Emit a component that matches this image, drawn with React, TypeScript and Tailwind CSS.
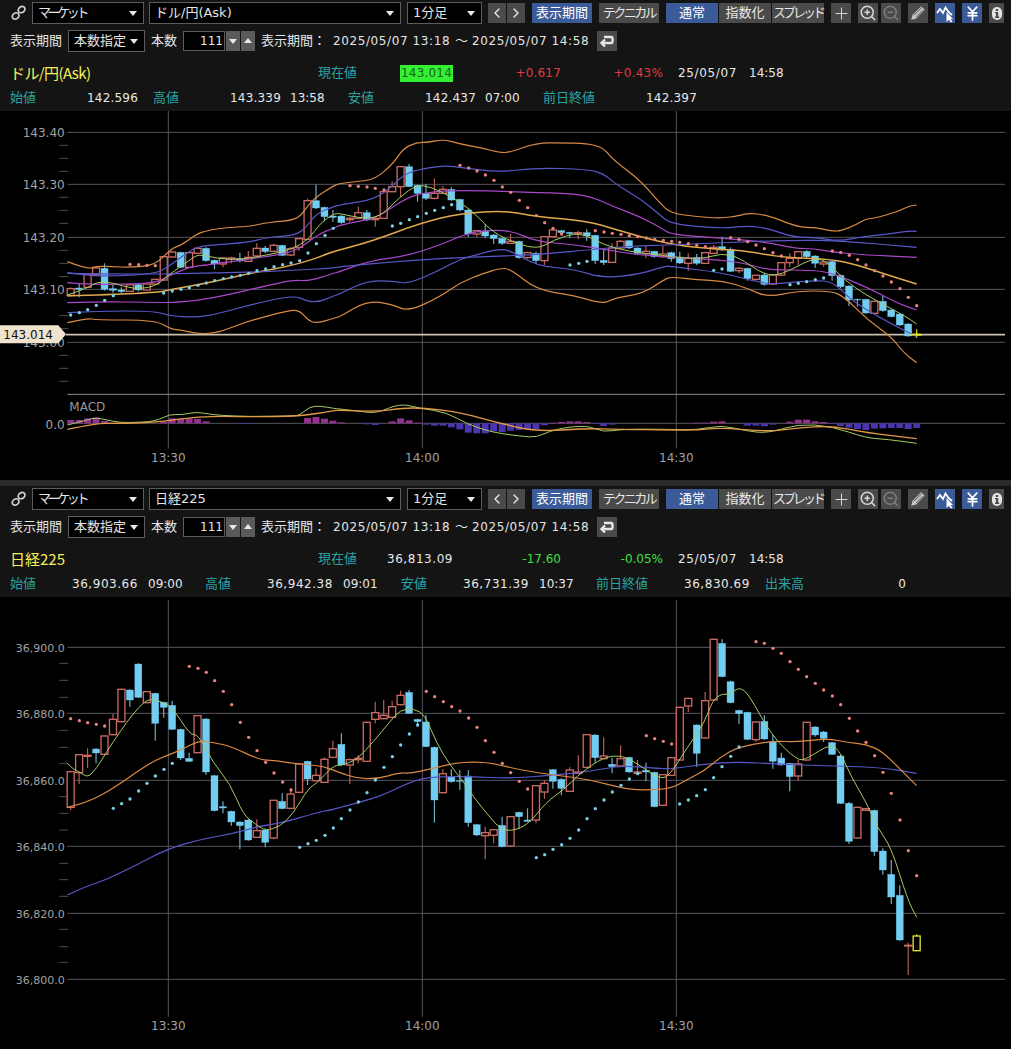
import React from 'react';
import { ChevronLeft, ChevronRight, Plus, ZoomIn, ZoomOut, JapaneseYen } from 'lucide-react';

// All chart coordinates are 3x screen pixels (x = screen x * 3).
type Pt = [number, number];
// kind, body top, body bottom, wick top, wick bottom
type Candle = [number, number, number, number, number];
const R = 0;
const B = 1;
const Y = 2;

const Z4 = 1020;
const Z5 = 2013;
const off = (o: number, pts: Pt[]): Pt[] => pts.map(([x, y]) => [x + o, y] as Pt);
const cx = (i: number) => 212 + 25.38 * i;

const usdCandles: Candle[] = [
  [R,536,556,532,558],[B,534,538,520,562],[R,492,532,490,535],[R,474,494,470,497],[B,475,538,460,542],
  [B,536,541,524,548],[B,540,545,532,550],[R,524,544,520,546],[B,524,540,520,544],[R,522,540,520,542],
  [R,508,522,506,525],[R,440,510,438,512],[R,426,441,424,442],[B,427,472,425,475],[R,428,472,426,474],
  [R,415,430,412,432],[B,415,452,412,455],[B,451,462,448,478],[R,444,462,442,472],[R,444,447,440,460],
  [B,446,453,428,457],[R,442,454,423,456],[R,415,438,400,442],[B,414,425,408,430],[R,406,424,401,427],
  [B,406,436,404,438],[R,416,435,412,437],[R,386,412,384,422],[R,272,388,266,390],[B,272,294,224,297],
  [B,292,320,290,334],[B,318,322,300,335],[B,318,338,316,341],[R,325,329,322,335],[R,308,325,290,328],
  [B,308,330,300,333],[R,325,329,322,350],[R,245,325,238,327],[R,230,245,214,247],[R,170,230,168,262],
  [B,170,230,162,232],[B,226,250,224,275],[B,250,265,222,270],[R,250,265,205,268],[R,238,250,228,252],
  [B,238,270,232,272],[B,268,300,266,304],[B,300,372,298,380],[R,362,372,360,380],[B,364,378,342,385],
  [B,375,386,372,402],[B,385,400,383,405],[R,394,400,372,402],[B,394,443,392,446],[R,428,443,425,446],
  [B,430,452,425,462],[R,380,452,378,465],[R,360,380,352,382],[B,362,368,360,375],[B,367,371,365,385],
  [R,368,370,362,388],[B,368,378,358,392],[B,376,452,374,462],[B,451,458,420,465],[R,414,457,400,459],
  [R,394,414,390,417],[B,392,414,390,417],[B,414,430,412,435],[R,424,431,408,445],[B,424,440,422,443],
  [R,432,440,408,443],[B,428,446,425,455],[B,441,459,425,462],[R,445,460,430,482],[B,442,460,432,465],
  [R,428,460,425,462],[R,412,430,405,432],[B,410,420,380,422],[B,418,484,412,486],[R,475,482,472,490],
  [B,475,506,473,512],[R,496,508,494,512],[B,495,523,490,527],[R,495,522,492,524],[R,458,495,456,498],
  [R,445,458,430,472],[R,425,445,423,465],[B,424,440,420,445],[B,438,460,436,474],[R,456,462,454,470],
  [B,455,497,452,512],[B,496,530,494,535],[B,528,570,526,588],[B,568,570,566,590],[B,568,609,566,611],
  [R,574,610,572,612],[B,574,602,555,605],[B,600,620,598,622],[B,612,645,610,648],[B,642,678,640,680],
  [Y,673,675,658,684],
];

const nikkeiCandles: Candle[] = [
  [R,515,622,512,630],[R,464,518,462,552],[R,466,469,445,504],[B,447,459,445,490],[R,408,463,406,465],
  [R,358,404,342,406],[R,268,365,266,367],[B,270,300,268,320],[B,192,292,190,294],[R,275,308,273,310],
  [B,280,370,278,422],[B,307,322,305,353],[B,316,388,302,390],[B,388,474,386,480],[B,475,484,458,486],
  [R,347,458,345,460],[B,357,516,355,525],[B,527,632,525,634],[B,620,624,604,640],[B,634,666,632,677],
  [B,666,677,664,748],[B,660,720,658,722],[R,692,712,658,714],[B,690,727,688,742],[R,601,714,599,718],
  [B,604,626,580,628],[R,582,625,565,627],[R,492,577,490,579],[B,484,537,482,555],[R,526,542,505,544],
  [R,478,547,472,549],[R,446,472,422,474],[B,433,495,400,497],[R,479,495,475,552],[R,475,479,465,490],
  [R,367,484,365,486],[R,338,358,305,370],[R,346,356,300,358],[R,320,352,302,355],[R,286,314,272,316],
  [B,277,340,270,342],[B,358,365,356,380],[B,366,440,345,442],[B,442,600,440,668],[R,521,578,507,580],
  [B,531,545,508,548],[B,542,544,510,570],[B,528,668,510,680],[B,674,705,672,708],[R,698,707,680,778],
  [R,689,706,687,730],[B,676,740,650,742],[R,650,738,648,740],[B,637,650,635,687],[B,660,664,625,666],
  [R,557,660,555,670],[R,550,576,540,596],[B,509,544,507,566],[B,538,565,535,585],[R,510,574,502,576],
  [R,516,520,466,522],[R,404,502,402,504],[B,405,473,403,488],[R,468,476,412,478],[B,493,500,473,520],
  [R,476,498,436,500],[B,472,516,470,518],[R,516,520,480,524],[B,511,516,488,544],[B,517,620,515,622],
  [R,524,616,522,618],[R,473,526,471,528],[R,322,480,320,482],[R,295,318,293,336],[B,375,460,373,500],
  [R,302,414,276,416],[R,118,300,116,302],[B,130,230,118,232],[B,245,308,242,310],[B,331,341,329,372],
  [B,337,418,335,420],[R,366,419,364,425],[B,364,417,346,419],[B,426,484,404,506],[B,474,495,458,497],
  [B,490,530,488,574],[R,492,528,480,542],[R,367,480,365,482],[B,381,405,379,410],[B,396,415,393,426],
  [B,428,463,426,465],[B,468,610,465,612],[B,610,724,606,732],[R,622,714,620,716],[R,626,631,624,633],
  [B,631,755,629,768],[B,753,810,745,824],[B,823,891,780,912],[B,886,1020,856,1022],[R,1036,1038,1028,1125],
  [Y,1008,1052,1003,1054],
];

const ORANGE = '#d98a42';
const GOLD = '#e0a94e';
const INDIGO = '#5858c8';
const PURPLE = '#a848c8';
const GREEN = '#a4cc62';

const usdLines: { color: string; w: number; pts: Pt[] }[] = [
  { color: ORANGE, w: 3.6, pts: [
    [202,455],[262,478],[290,468],[340,470],[390,472],[465,466],[515,415],[545,405],[590,372],[620,362],[680,352],[745,350],[790,340],[830,335],[870,332],[900,320],[925,285],[950,260],[1000,228],
    ...off(Z4, [[0,220],[50,215],[105,208],[160,160],[190,115],[230,97],[265,97],[310,88],[360,102],[430,115],[480,128],[510,127],[590,98],[670,99],[740,100],[790,113],[820,150],[900,210],[960,280],[993,310]]),
    ...off(Z5, [[80,320],[150,325],[205,317],[230,309],[290,315],[380,352],[435,352],[485,364],[510,362],[555,345],[585,326],[610,325],[680,305],[715,288],[737,285]]),
  ] },
  { color: INDIGO, w: 3.6, pts: [
    [202,488],[262,497],[340,498],[465,492],[505,470],[545,440],[590,410],[640,405],[745,397],[790,385],[830,380],[890,375],[920,350],[950,310],[1000,290],
    ...off(Z4, [[0,285],[105,268],[160,225],[190,195],[230,180],[310,166],[360,172],[480,187],[590,173],[740,178],[790,190],[830,225],[900,265],[960,315],[993,342]]),
    ...off(Z5, [[150,356],[230,347],[290,355],[370,382],[435,382],[505,394],[585,378],[640,374],[710,363],[737,364]]),
  ] },
  { color: PURPLE, w: 3.6, pts: [
    [202,518],[262,525],[465,520],[505,498],[570,470],[620,465],[800,440],[880,425],[920,400],[960,370],[1000,355],
    ...off(Z4, [[0,345],[105,325],[160,290],[200,265],[240,250],[340,240],[590,247],[740,253],[820,290],[900,320],[960,352],[993,374]]),
    ...off(Z5, [[150,384],[290,397],[370,415],[430,416],[485,426],[585,435],[737,442]]),
  ] },
  { color: PURPLE, w: 3.6, pts: [
    [202,578],[300,575],[465,577],[510,578],[590,572],[680,555],[800,527],[880,510],[930,513],[1000,490],
    ...off(Z4, [[0,485],[90,452],[200,438],[300,405],[370,375],[420,362],[510,360],[590,395],[700,403],[800,420],[900,435],[993,442]]),
    ...off(Z5, [[150,450],[230,462],[290,480],[430,480],[490,492],[585,530],[680,580],[737,600]]),
  ] },
  { color: INDIGO, w: 3.6, pts: [
    [202,608],[290,603],[465,603],[510,618],[590,622],[650,612],[750,585],[880,555],[925,575],[960,575],[1000,558],
    ...off(Z4, [[0,552],[80,512],[160,513],[205,522],[300,480],[360,447],[420,432],[470,418],[510,420],[590,468],[700,477],[790,505],[900,492],[980,467],[993,470]]),
    ...off(Z5, [[150,487],[290,524],[350,518],[430,512],[485,514],[540,570],[620,620],[737,680]]),
  ] },
  { color: ORANGE, w: 3.6, pts: [
    [202,638],[262,624],[290,630],[465,630],[515,658],[545,660],[590,671],[640,670],[680,658],[750,632],[870,600],[900,602],[925,632],[950,640],[1000,625],
    ...off(Z4, [[0,620],[80,572],[155,582],[205,605],[300,560],[360,518],[430,490],[480,475],[510,476],[590,540],[700,556],[790,582],[820,565],[910,550],[970,510],[993,500]]),
    ...off(Z5, [[80,510],[155,512],[230,535],[290,562],[380,543],[480,543],[520,560],[590,630],[660,680],[700,730],[737,758]]),
  ] },
  { color: GOLD, w: 4.5, pts: [
    [202,558],[465,550],[515,538],[620,520],[750,490],[900,462],[1000,425],
    ...off(Z4, [[0,420],[100,392],[240,340],[360,310],[500,302],[590,320],[740,332],[830,360],[993,405]]),
    ...off(Z5, [[150,418],[230,424],[330,442],[480,447],[560,465],[650,495],[737,522]]),
  ] },
  { color: INDIGO, w: 3.6, pts: [
    [202,490],[465,493],[560,490],[745,487],[900,480],[1000,474],
    ...off(Z4, [[0,470],[200,452],[400,440],[590,435],[790,415],[900,407],[993,405]]),
    ...off(Z5, [[350,390],[505,392],[737,412]]),
  ] },
  { color: GREEN, w: 3, pts: [
    [202,555],[262,535],[290,515],[340,518],[400,538],[465,530],[505,495],[570,450],[595,432],[650,445],[720,450],[800,435],[870,420],[925,390],[960,340],[1000,312],
    ...off(Z4, [[0,310],[60,325],[120,322],[180,260],[230,225],[270,230],[330,258],[395,300],[440,350],[490,385],[590,420],[640,390],[720,365],[790,405],[870,425],[960,435],[993,440]]),
    ...off(Z5, [[90,448],[150,430],[200,440],[280,495],[330,495],[420,447],[460,447],[520,510],[585,555],[650,590],[705,620],[737,642]]),
  ] },
];

const usdMacdLines: { color: string; w: number; pts: Pt[] }[] = [
  { color: GREEN, w: 3, pts: [
    [202,945],[262,930],[290,922],[340,935],[380,938],[465,935],[510,912],[545,915],[590,905],[640,915],[745,920],[880,918],[900,915],[930,890],[960,888],[1000,895],
    ...off(Z4, [[0,897],[60,904],[110,910],[180,880],[240,895],[320,907],[380,942],[460,968],[540,978],[590,983],[640,958],[740,945],[790,967],[850,957],[993,958]]),
    ...off(Z5, [[80,960],[150,945],[220,962],[290,970],[380,942],[480,948],[585,984],[650,988],[737,1000]]),
  ] },
  { color: '#e09a48', w: 4, pts: [
    [202,958],[290,940],[340,940],[465,938],[600,918],[745,920],[900,919],[1000,902],
    ...off(Z4, [[0,900],[110,905],[190,894],[250,894],[360,907],[480,940],[590,965],[740,955],[840,958],[993,960]]),
    ...off(Z5, [[80,960],[150,953],[290,965],[380,954],[480,947],[585,968],[737,986]]),
  ] },
];

const nikkeiLines: { color: string; w: number; pts: Pt[] }[] = [
  { color: INDIGO, w: 3.6, pts: [
    [202,885],[260,858],[310,843],[400,800],[505,745],[620,714],[695,702],[770,680],[850,668],[950,638],[1000,628],
    ...off(Z4, [[0,622],[60,607],[130,585],[230,537],[300,530],[400,530],[510,535],[620,527],[720,518],[800,505],[850,497],[940,504],[993,507]]),
    ...off(Z5, [[100,492],[200,485],[330,493],[450,497],[630,502],[737,520]]),
  ] },
  { color: ORANGE, w: 3.6, pts: [
    [202,622],[262,608],[340,565],[440,495],[490,470],[545,450],[595,422],[640,427],[695,440],[780,480],[820,481],[880,490],[960,497],[1000,510],
    ...off(Z4, [[0,518],[50,535],[110,537],[180,518],[210,520],[280,505],[340,490],[400,485],[460,490],[540,510],[640,525],[740,537],[860,568],[920,570],[993,566]]),
    ...off(Z5, [[50,538],[100,512],[150,470],[200,442],[300,423],[385,426],[470,415],[530,428],[585,432],[635,455],[690,510],[737,557]]),
  ] },
  { color: GREEN, w: 3, pts: [
    [202,490],[220,508],[240,516],[263,533],[290,505],[320,455],[360,395],[400,340],[440,298],[470,300],[515,318],[570,405],[595,403],[640,490],[690,550],[730,645],[770,675],[797,692],[840,680],[880,640],[925,565],[950,550],[1000,497],
    ...off(Z4, [[0,497],[50,480],[100,425],[150,365],[180,330],[220,325],[255,345],[290,430],[330,495],[370,545],[400,590],[440,640],[490,698],[560,680],[620,605],[670,570],[720,520],[790,472],[845,465],[890,490],[960,538],[990,525]]),
    ...off(Z5, [[50,440],[100,370],[125,300],[155,280],[175,285],[205,260],[235,285],[300,405],[380,483],[410,475],[480,430],[510,460],[540,530],[585,605],[620,685],[660,740],[710,900],[737,952]]),
  ] },
];

const usdRed: Pt[] = [
  [390,463],[416,464],[441,466],[466,467],
  ...off(Z4, [[30,227],[55,229],[81,231],[106,235],[132,240],[360,166],[386,174],[411,183],[436,195],[462,211],[487,231],[512,247],[538,271],[563,293],[589,317],[614,338],[639,355],[665,372],[766,362],[792,366],[817,370],[843,373],[868,377],[893,380],[919,384],[944,388],[970,391],[995,394]]),
  ...off(Z5, [[26,397],[52,401],[77,406],[103,410],[179,383],[204,388],[230,395],[255,405],[280,416],[306,428],[331,438],[484,423],[509,427],[535,436],[560,449],[585,465],[611,482],[636,498],[661,516],[687,536],[712,562],[737,587]]),
];
const usdBlue: Pt[] = [
  [212,615],[238,608],[263,599],[289,586],[314,571],[340,557],[491,549],[517,543],[543,538],[568,533],[594,526],[619,519],[644,512],[670,506],[695,501],[721,496],[746,490],[771,482],[797,477],[822,470],[848,464],[873,459],[899,452],[924,429],[949,401],[975,376],[1000,355],
  ...off(Z4, [[157,348],[182,340],[208,329],[233,320],[259,310],[284,301],[310,293],[335,284],[690,465],[716,460],[741,454]]),
  ...off(Z5, [[128,481],[153,477],[357,524],[382,520],[407,515],[433,509],[458,504]]),
];
const nikkeiRed: Pt[] = [
  [212,356],[238,362],[263,368],[289,373],[314,378],[568,199],[594,205],[619,217],[644,242],[670,274],[695,314],[721,367],[746,412],[771,452],[797,487],[822,519],[848,546],[873,570],
  ...off(Z4, [[259,274],[284,290],[310,305],[335,320],[360,333],[386,354],[411,382],[436,422],[462,457],[487,490],[512,518],[538,544],[563,567],[919,407],[944,416],[970,424],[995,432]]),
  ...off(Z5, [[255,125],[280,130],[306,145],[331,160],[357,185],[382,208],[407,230],[433,250],[458,270],[484,288],[509,314],[535,355],[560,393],[585,427],[611,467],[636,517],[661,580],[687,660],[712,752],[737,827]]),
];
const nikkeiBlue: Pt[] = [
  [340,625],[365,611],[390,597],[416,573],[441,550],[466,528],[492,508],[517,490],[899,742],[924,731],[949,721],[975,706],[1000,684],
  ...off(Z4, [[4,656],[30,630],[55,606],[81,578],[106,540],[132,502],[157,470],[182,435],[208,402],[233,375],[589,773],[614,764],[639,748],[665,734],[690,715],[716,690],[741,656],[766,626],[792,600],[817,576],[843,556],[868,537],[893,521]]),
  ...off(Z5, [[26,612],[52,600],[77,587],[103,569],[128,533],[153,500],[179,469],[204,441]]),
];

// index, top of bar against baseline 940
const macdBars: [number, number][] = [
  [0,930],[1,930],[2,925],[3,922],[4,933],[11,935],[12,925],[13,926],[14,926],[15,927],[16,934],[20,942],[21,942],
  [28,924],[29,921],[30,926],[31,932],[32,937],[35,943],[36,945],[38,934],[39,925],[40,931],[41,938],[42,944],[43,947],
  [44,947],[45,952],[46,958],[47,968],[48,970],[49,970],[50,964],[51,966],[52,962],[53,960],[54,958],[55,958],[56,946],
  [57,938],[58,936],[59,934],[60,934],[61,936],[62,942],[63,948],[64,944],[74,938],[75,938],[76,935],[77,934],[80,947],
  [81,947],[82,949],[83,944],[85,935],[86,929],[87,929],[88,934],[89,936],[90,942],[91,948],[92,953],[93,957],[94,960],
  [95,956],[96,955],[97,954],[98,954],[99,957],[100,954],
];

// rounds the hand-read points off through their midpoints
const toPath = (pts: Pt[]) => {
  let d = `M${pts[0][0]} ${pts[0][1]}`;
  for (let i = 1; i < pts.length - 1; i++) {
    const [x, y] = pts[i];
    const [nx, ny] = pts[i + 1];
    d += `Q${x} ${y} ${(x + nx) / 2} ${(y + ny) / 2}`;
  }
  const last = pts[pts.length - 1];
  return `${d}L${last[0]} ${last[1]}`;
};

const Candles = ({ data }: { data: Candle[] }) => (
  <g>
    {data.map(([kind, top, bot, wTop, wBot], i) => {
      const x = cx(i);
      const red = kind === R;
      const yellow = kind === Y;
      const color = yellow ? '#e4e428' : red ? '#c96a62' : '#72cdf2';
      const wick = yellow ? '#e4e428' : red ? '#b96058' : '#6fb2cc';
      return (
        <g key={i}>
          <line x1={x} x2={x} y1={wTop} y2={wBot} stroke={wick} strokeWidth={3.5} />
          <rect
            x={x - 10.5}
            y={top}
            width={21}
            height={bot - top}
            fill={red || yellow ? '#000' : color}
            stroke={color}
            strokeWidth={red || yellow ? 4 : 1}
          />
        </g>
      );
    })}
  </g>
);

const Lines = ({ data }: { data: { color: string; w: number; pts: Pt[] }[] }) => (
  <g fill="none">
    {data.map((l, i) => (
      <path key={i} d={toPath(l.pts)} stroke={l.color} strokeWidth={l.w} strokeLinejoin="round" />
    ))}
  </g>
);

const Dots = ({ pts, color }: { pts: Pt[]; color: string }) => (
  <g fill={color}>
    {pts.map(([x, y], i) => (
      <circle key={i} cx={x} cy={y} r={5} />
    ))}
  </g>
);

const Grid = ({ rows, ticks, bottom, fontSize, timeY, labels }: {
  rows: number[];
  ticks: number[];
  bottom: number;
  fontSize: number;
  timeY: number;
  labels: string[];
}) => (
  <g>
    {rows.map((y) => (
      <line key={y} x1={202} x2={3015} y1={y} y2={y} stroke="#55555c" strokeWidth={3} />
    ))}
    {ticks.map((y) => (
      <line key={y} x1={178} x2={205} y1={y} y2={y} stroke="#4c4c4c" strokeWidth={3} />
    ))}
    {[505, 1267, 2029].map((x) => (
      <line key={x} x1={x} x2={x} y1={0} y2={bottom} stroke="#55555c" strokeWidth={3} />
    ))}
    {rows.map((y, i) => (
      <text key={y} x={194} y={y + 13} textAnchor="end" fontSize={fontSize} fill="#a2a2a2">
        {labels[i]}
      </text>
    ))}
    {['13:30', '14:00', '14:30'].map((t, i) => (
      <text key={t} x={[505, 1267, 2029][i]} y={timeY} textAnchor="middle" fontSize={36} fill="#a2a2a2">
        {t}
      </text>
    ))}
  </g>
);

const UsdChart = () => (
  <svg viewBox="0 3 3033 1107" className="block w-[1011px] h-[369px] bg-black font-['DejaVu_Sans',sans-serif]">
    <Grid
      rows={[67, 223, 382, 538, 697]}
      ticks={[106, 145, 184, 262, 301, 340, 421, 460, 500, 617, 656, 736, 775, 814]}
      bottom={1015}
      fontSize={36}
      timeY={1056}
      labels={['143.40', '143.30', '143.20', '143.10', '143.00']}
    />
    <line x1={202} x2={3015} y1={853} y2={853} stroke="#8c8c8c" strokeWidth={3} />
    <line x1={202} x2={3015} y1={940} y2={940} stroke="#55555c" strokeWidth={3} />
    <line x1={198} x2={3015} y1={674} y2={674} stroke="#c9c2ae" strokeWidth={5} />
    <Candles data={usdCandles} />
    <Lines data={usdLines} />
    <Dots pts={usdRed} color="#e8827a" />
    <Dots pts={usdBlue} color="#79cfe6" />
    {macdBars.map(([i, top]) => (
      <rect
        key={i}
        x={cx(i) - 10.5}
        y={Math.min(top, 940)}
        width={21}
        height={Math.abs(top - 940)}
        fill={top < 940 ? '#94308e' : '#4a35ae'}
      />
    ))}
    <Lines data={usdMacdLines} />
    <line x1={2730} x2={2766} y1={674} y2={674} stroke="#e4e428" strokeWidth={4} />
    <text x={208} y={904} fontSize={36} fill="#9a9a9a">MACD</text>
    <text x={194} y={956} textAnchor="end" fontSize={36} fill="#a2a2a2">0.0</text>
    <polygon points="0,646 175,646 198,673 175,700 0,700" fill="#efe3cd" />
    <text x={10} y={687} fontSize={36} fill="#111">143.014</text>
  </svg>
);

const NikkeiChart = () => (
  <svg viewBox="0 -9 3033 1356" className="block w-[1011px] h-[452px] bg-black font-['DejaVu_Sans',sans-serif]">
    <Grid
      rows={[142, 340, 541, 739, 940, 1138]}
      ticks={[190, 241, 292, 391, 442, 491, 590, 640, 690, 790, 839, 889, 988, 1040, 1087]}
      bottom={1250}
      fontSize={33}
      timeY={1290}
      labels={['36,900.0', '36,880.0', '36,860.0', '36,840.0', '36,820.0', '36,800.0']}
    />
    <Candles data={nikkeiCandles} />
    <Lines data={nikkeiLines} />
    <Dots pts={nikkeiRed} color="#e8827a" />
    <Dots pts={nikkeiBlue} color="#79cfe6" />
  </svg>
);

const Caret = () => (
  <svg viewBox="0 0 8 5" className="w-[8px] h-[5px] shrink-0">
    <path d="M0 0H8L4 5Z" fill="#e8e8e8" />
  </svg>
);

const Select = ({ w, children }: { w: string; children: React.ReactNode }) => (
  <div className={`${w} h-[22px] flex items-center justify-between bg-black border border-[#5c5c5c] pl-[5px] pr-[6px] text-[13px] text-[#e4e4e4]`}>
    <span className="whitespace-nowrap">{children}</span>
    <Caret />
  </div>
);

const Btn = ({ w, blue, children }: { w: string; blue?: boolean; children: React.ReactNode }) => (
  <div className={`${w} h-[20px] flex items-center justify-center text-[13px] whitespace-nowrap ${blue ? 'bg-[#3b5b98] text-white' : 'bg-[#4a4a4a] text-[#e8e8e8]'}`}>
    {children}
  </div>
);

const LinkIcon = () => (
  <svg viewBox="0 0 16 16" className="w-[16px] h-[16px] ml-[11px] mr-[5px]" fill="none" stroke="#cfcfcf" strokeWidth="1.7">
    <ellipse cx="4.6" cy="11" rx="3.6" ry="2.9" transform="rotate(-35 4.6 11)" />
    <ellipse cx="10.6" cy="4.6" rx="3.6" ry="2.9" transform="rotate(-35 10.6 4.6)" />
  </svg>
);

const CursorIcon = () => (
  <svg viewBox="0 0 20 20" className="w-[20px] h-[20px]">
    <path d="M2 10L5 6L8 10L10.5 4.5L13.5 9L17 12" fill="none" stroke="#fff" strokeWidth="1.8" />
    <path d="M11.5 9V19L13.8 16.8L16 19.5L17.5 18.4L15.5 16H18Z" fill="#fff" />
  </svg>
);

const PencilIcon = () => (
  <svg viewBox="0 0 20 20" className="w-[18px] h-[18px]">
    <path d="M2.5 17.5L4 12L13.5 2.5L17.5 6.5L8 16Z" fill="#c4c4c4" />
    <path d="M5.5 12.5L14 4M8 14.5L16 6.5" stroke="#4a4a4a" strokeWidth="1" fill="none" />
  </svg>
);

const InfoIcon = () => (
  <svg viewBox="0 0 10 13" className="w-[10px] h-[13px]">
    <rect width="10" height="13" rx="5" fill="#e4e4e4" />
    <rect x="3.8" y="2" width="2.4" height="2" fill="#4a4a4a" />
    <path d="M3 5H6.2V9.6H7.2V11H3V9.6H4V6.2H3Z" fill="#4a4a4a" />
  </svg>
);

const ReturnIcon = () => (
  <svg viewBox="0 0 16 14" className="w-[16px] h-[14px]" fill="none" stroke="#e8e8e8" strokeWidth="2.4">
    <path d="M5 3H12.5A1.5 1.5 0 0 1 13.5 4.5V7.5A1.5 1.5 0 0 1 12.5 9H3" />
    <path d="M6 5.5L2.5 9L6 12.5" />
  </svg>
);

const Toolbar = ({ pair }: { pair: string }) => (
  <div className="flex items-center h-[22px]">
    <LinkIcon />
    <Select w="w-[112px]"><span className="tracking-[-3.4px]">マーケット</span></Select>
    <div className="w-[5px]" />
    <Select w="w-[252px]">{pair}</Select>
    <div className="w-[6px]" />
    <Select w="w-[75px]">1分足</Select>
    <div className="flex gap-[1px] ml-[6px]">
      <Btn w="w-[18px]"><ChevronLeft size={16} strokeWidth={2} /></Btn>
      <Btn w="w-[18px]"><ChevronRight size={16} strokeWidth={2} /></Btn>
    </div>
    <div className="ml-[7px]"><Btn w="w-[60px]" blue>表示期間</Btn></div>
    <div className="ml-[7px]"><Btn w="w-[60px]"><span className="tracking-[-2.5px]">テクニカル</span></Btn></div>
    <div className="flex gap-[1px] ml-[7px]">
      <Btn w="w-[52px]" blue>通常</Btn>
      <Btn w="w-[52px]">指数化</Btn>
      <Btn w="w-[52px]"><span className="tracking-[-3px]">スプレッド</span></Btn>
    </div>
    <div className="ml-[7px]"><Btn w="w-[20px]"><Plus size={19} strokeWidth={1.1} color="#f2f2f2" /></Btn></div>
    <div className="flex gap-[3px] ml-[7px]">
      <Btn w="w-[20px]"><ZoomIn size={18} strokeWidth={2} color="#d8d8d8" /></Btn>
      <Btn w="w-[20px]"><ZoomOut size={18} strokeWidth={2} color="#7c7c7c" /></Btn>
    </div>
    <div className="ml-[7px]"><Btn w="w-[20px]"><PencilIcon /></Btn></div>
    <div className="ml-[7px]"><Btn w="w-[20px]" blue><CursorIcon /></Btn></div>
    <div className="ml-[7px]"><Btn w="w-[20px]" blue><JapaneseYen size={17} strokeWidth={2.4} /></Btn></div>
    <div className="ml-[7px]"><Btn w="w-[15px]"><InfoIcon /></Btn></div>
  </div>
);

const PeriodRow = () => (
  <div className="flex items-center h-[22px] mt-[6px] pl-[10px] text-[13px] text-[#e4e4e4]">
    <span className="w-[58px]">表示期間</span>
    <Select w="w-[77px]">本数指定</Select>
    <span className="w-[32px] ml-[6px]">本数</span>
    <div className="w-[42px] h-[20px] bg-black border border-[#5c5c5c] flex items-center justify-end pr-[1px] text-[12px] font-['DejaVu_Sans']">111</div>
    <div className="flex gap-[1px] ml-[1px]">
      <div className="w-[14px] h-[20px] bg-[#5a5a5a] flex items-center justify-center"><Caret /></div>
      <div className="w-[14px] h-[20px] bg-[#5a5a5a] flex items-center justify-center rotate-180"><Caret /></div>
    </div>
    <span className="w-[72px] ml-[6px]">表示期間：</span>
    <span className="w-[122px] text-[12px] tracking-[0.6px] font-['DejaVu_Sans'] whitespace-nowrap">2025/05/07 13:18</span>
    <span className="w-[17px] text-[13px]">～</span>
    <span className="w-[125px] text-[12px] tracking-[0.6px] font-['DejaVu_Sans'] whitespace-nowrap">2025/05/07 14:58</span>
    <div className="w-[20px] h-[20px] bg-[#4a4a4a] flex items-center justify-center"><ReturnIcon /></div>
  </div>
);

const T = ({ className, children }: { className: string; children: React.ReactNode }) => (
  <span className={`shrink-0 whitespace-nowrap ${className}`}>{children}</span>
);

const TEAL = 'text-[13px] text-[#2ba3a3]';

const App = () => {
  return (
    <div className="w-[1011px] h-[1049px] bg-[#2a2a2a] overflow-hidden font-['DejaVu_Sans','Noto_Sans_CJK_JP',sans-serif] text-[12px] text-[#e8e8e8]">
      <div className="h-[111px] bg-[#141414] pt-[2px]">
        <Toolbar pair="ドル/円(Ask)" />
        <PeriodRow />
        <div className="flex items-center h-[22px] mt-[10px] pl-[10px]">
          <T className="w-[308px] text-[15px] text-[#f4f25a] font-['Noto_Sans_CJK_JP'] tracking-[-0.6px]">ドル/円(Ask)</T>
          <T className={`w-[82px] ${TEAL}`}>現在値</T>
          <T className="w-[53px] h-[17px] leading-[17px] text-center bg-[#34f034] text-[#17621a] tracking-[0.2px]">143.014</T>
          <T className="w-[108px] text-right text-[#e23b3b] tracking-[0.2px]">+0.617</T>
          <T className="w-[102px] text-right text-[#e23b3b] tracking-[0.2px]">+0.43%</T>
          <T className="w-[71px] ml-[15px] tracking-[0.65px]">25/05/07</T>
          <T className="">14:58</T>
        </div>
        <div className="flex items-center h-[22px] mt-[3px] pl-[10px]">
          <T className={`w-[26px] ${TEAL}`}>始値</T>
          <T className="w-[102px] text-right tracking-[0.2px]">142.596</T>
          <T className={`w-[26px] ml-[15px] ${TEAL}`}>高値</T>
          <T className="w-[102px] text-right tracking-[0.2px]">143.339</T>
          <T className="w-[36px] ml-[9px]">13:58</T>
          <T className={`w-[26px] ml-[22px] ${TEAL}`}>安値</T>
          <T className="w-[102px] text-right tracking-[0.2px]">142.437</T>
          <T className="w-[36px] ml-[9px]">07:00</T>
          <T className={`w-[52px] ml-[22px] ${TEAL}`}>前日終値</T>
          <T className="w-[102px] text-right tracking-[0.2px]">142.397</T>
        </div>
      </div>
      <UsdChart />

      <div className="h-[111px] mt-[6px] bg-[#141414] pt-[2px]">
        <Toolbar pair="日経225" />
        <PeriodRow />
        <div className="flex items-center h-[22px] mt-[10px] pl-[10px]">
          <T className="w-[308px] text-[15px] text-[#f4f25a] font-['Noto_Sans_CJK_JP']">日経225</T>
          <T className={`w-[69px] ${TEAL}`}>現在値</T>
          <T className="w-[66px] tracking-[0.55px]">36,813.09</T>
          <T className="w-[108px] text-right text-[#3fe03f]">-17.60</T>
          <T className="w-[102px] text-right text-[#3fe03f]">-0.05%</T>
          <T className="w-[71px] ml-[15px] tracking-[0.65px]">25/05/07</T>
          <T className="">14:58</T>
        </div>
        <div className="flex items-center h-[22px] mt-[3px] pl-[10px]">
          <T className={`w-[26px] ${TEAL}`}>始値</T>
          <T className="w-[102px] text-right tracking-[0.55px]">36,903.66</T>
          <T className="w-[36px] ml-[10px]">09:00</T>
          <T className={`w-[26px] ml-[21px] ${TEAL}`}>高値</T>
          <T className="w-[102px] text-right tracking-[0.55px]">36,942.38</T>
          <T className="w-[36px] ml-[10px]">09:01</T>
          <T className={`w-[26px] ml-[22px] ${TEAL}`}>安値</T>
          <T className="w-[102px] text-right tracking-[0.55px]">36,731.39</T>
          <T className="w-[36px] ml-[10px]">10:37</T>
          <T className={`w-[52px] ml-[21px] ${TEAL}`}>前日終値</T>
          <T className="w-[102px] text-right tracking-[0.55px]">36,830.69</T>
          <T className={`w-[39px] ml-[15px] ${TEAL}`}>出来高</T>
          <T className="w-[102px] text-right">0</T>
        </div>
      </div>
      <NikkeiChart />
    </div>
  );
};

export default App;
